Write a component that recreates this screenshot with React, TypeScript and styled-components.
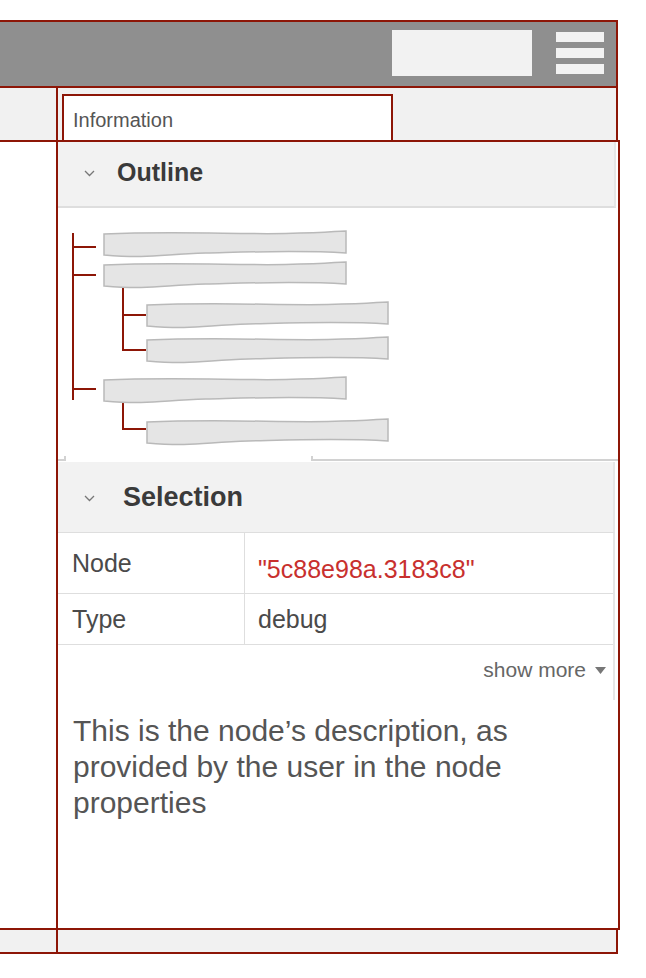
import React from "react";
import styled, { createGlobalStyle } from "styled-components";

const RED = "#8d1607";

const Global = createGlobalStyle`
  html, body { margin: 0; padding: 0; background: #fff; }
  body { font-family: "Liberation Sans", Arial, Helvetica, sans-serif; }
  *, *::before, *::after { box-sizing: border-box; }
`;

const Frame = styled.div`
  margin-top: 20px;
  width: 620px;
  display: flex;
  flex-direction: column;
`;

const TopBar = styled.header`
  width: 618px;
  height: 68px;
  background: #8f8f8f;
  border-top: 2px solid ${RED};
  border-bottom: 2px solid ${RED};
  border-right: 2px solid ${RED};
  display: flex;
  justify-content: flex-end;
  align-items: flex-start;
  gap: 24px;
  padding-right: 12px;
`;

const SearchBox = styled.div`
  width: 140px;
  height: 46px;
  margin-top: 8px;
  background: #f2f2f2;
`;

const Menu = styled.div`
  display: flex;
  flex-direction: column;
  gap: 6px;
  margin-top: 10px;
`;

const MenuBar = styled.span`
  display: block;
  width: 48px;
  height: 10px;
  background: #f2f2f2;
`;

const TabRow = styled.div`
  display: flex;
  width: 618px;
  height: 52px;
  background: #f1f1f1;
  border-right: 2px solid ${RED};
`;

const SideCell = styled.div<{ $bg?: string }>`
  width: 58px;
  flex-shrink: 0;
  border-right: 2px solid ${RED};
  background: ${(p) => p.$bg ?? "#fff"};
`;

const TabStrip = styled.div`
  flex: 1;
  display: flex;
  align-items: flex-end;
  padding-left: 4px;
`;

const Tab = styled.div`
  width: 331px;
  height: 46px;
  background: #fff;
  border: 2px solid ${RED};
  border-bottom: none;
  display: flex;
  align-items: center;
  padding: 4px 0 0 9px;
  font-size: 20px;
  color: #555;
`;

const MainRow = styled.div`
  display: flex;
  width: 620px;
  height: 790px;
  border-top: 2px solid ${RED};
  border-bottom: 2px solid ${RED};
`;

const Panel = styled.section`
  flex: 1;
  display: flex;
  flex-direction: column;
  border-right: 2px solid ${RED};
  background: #fff;
  overflow: hidden;
`;

const Footer = styled.footer`
  display: flex;
  width: 618px;
  height: 24px;
  background: #f1f1f1;
  border-right: 2px solid ${RED};
  border-bottom: 2px solid ${RED};
`;

const SectionHeader = styled.div<{
  $height: number;
  $inset: number;
  $gap: number;
  $size: number;
  $border: number;
  $lift: number;
}>`
  height: ${(p) => p.$height}px;
  margin-right: ${(p) => p.$inset}px;
  background: #f2f2f2;
  border-right: 2px solid #e6e6e6;
  border-bottom: ${(p) => p.$border}px solid #dedede;
  display: flex;
  align-items: center;
  gap: ${(p) => p.$gap}px;
  padding-left: 26px;
  padding-bottom: ${(p) => p.$lift}px;
  font-size: ${(p) => p.$size}px;
  font-weight: bold;
  color: #3a3a3a;
`;

const Chevron = styled.svg`
  width: 11px;
  height: 7px;
  flex-shrink: 0;
  margin-top: 2px;
`;

const OutlineBody = styled.div`
  height: 248px;
  padding: 17px 0 0 2px;
`;

const Splitter = styled.div`
  height: 6px;
  display: flex;
  align-items: flex-start;
`;

const SplitCap = styled.div<{ $grow?: boolean; $side: "left" | "right"; $offset?: number }>`
  height: 5px;
  width: ${(p) => (p.$grow ? "auto" : "8px")};
  flex: ${(p) => (p.$grow ? 1 : "none")};
  margin-left: ${(p) => p.$offset ?? 0}px;
  border-bottom: 2px solid #d2d2d2;
  border-${(p) => p.$side}: 2px solid #d2d2d2;
`;

const PropTable = styled.div`
  display: grid;
  grid-template-columns: 187px 1fr;
  margin-right: 3px;
  border-right: 2px solid #e6e6e6;
  font-size: 25px;
`;

const LabelCell = styled.div<{ $height: number }>`
  height: ${(p) => p.$height}px;
  display: flex;
  align-items: center;
  padding-left: 14px;
  color: #4a4a4a;
  border-right: 1px solid #dedede;
  border-bottom: 1px solid #dedede;
`;

const ValueCell = styled.div<{ $height: number; $shift?: number; $tone?: "red" | "plain" }>`
  height: ${(p) => p.$height}px;
  display: flex;
  align-items: center;
  padding-left: 13px;
  padding-top: ${(p) => p.$shift ?? 0}px;
  color: ${(p) => (p.$tone === "red" ? "#c8302e" : "#4a4a4a")};
  border-bottom: 1px solid #dedede;
`;

const ShowMoreRow = styled.div`
  height: 55px;
  margin-right: 3px;
  border-right: 2px solid #e6e6e6;
  display: flex;
  justify-content: flex-end;
  align-items: flex-start;
  gap: 9px;
  padding: 13px 7px 0 0;
  font-size: 21px;
  color: #666;
`;

const Caret = styled.svg`
  width: 11px;
  height: 7px;
  margin-top: 9px;
`;

const Description = styled.p`
  margin: 0;
  padding: 13px 24px 0 15px;
  font-size: 30px;
  line-height: 36px;
  color: #555;
`;

function bar(x: number, y: number, w: number, h: number) {
  return [
    `M ${x} ${y + 2}`,
    `C ${x + w * 0.3} ${y - 1} ${x + w * 0.55} ${y + 2.5} ${x + w * 0.75} ${y + 1.5}`,
    `S ${x + w * 0.95} ${y - 1} ${x + w} ${y - 1}`,
    `L ${x + w} ${y + h - 3}`,
    `C ${x + w * 0.8} ${y + h - 6} ${x + w * 0.6} ${y + h - 4} ${x + w * 0.42} ${y + h - 3}`,
    `S ${x + w * 0.2} ${y + h + 3} ${x} ${y + h - 1}`,
    "Z",
  ].join(" ");
}

const level0 = [232, 263, 378];
const level1 = [303, 338, 420];

function OutlineTree() {
  return (
    <svg width={340} height={225} viewBox="60 225 340 225">
      <g stroke={RED} strokeWidth={2} fill="none">
        <line x1={73} y1={233} x2={73} y2={400} />
        <line x1={72} y1={247} x2={96} y2={247} />
        <line x1={72} y1={275} x2={96} y2={275} />
        <line x1={72} y1={389} x2={96} y2={389} />
        <line x1={123} y1={287} x2={123} y2={351} />
        <line x1={122} y1={315} x2={146} y2={315} />
        <line x1={122} y1={350} x2={146} y2={350} />
        <line x1={123} y1={402} x2={123} y2={430} />
        <line x1={122} y1={429} x2={146} y2={429} />
      </g>
      <g fill="#e5e5e5" stroke="#b9b9b9" strokeWidth={1.5}>
        {level0.map((y) => (
          <path key={`a${y}`} d={bar(104, y, 242, 24)} />
        ))}
        {level1.map((y) => (
          <path key={`b${y}`} d={bar(147, y, 241, 24)} />
        ))}
      </g>
    </svg>
  );
}

function Chev() {
  return (
    <Chevron viewBox="0 0 11 7">
      <polyline points="1,1 5.5,5.5 10,1" fill="none" stroke="#777" strokeWidth={1.3} />
    </Chevron>
  );
}

export default function App() {
  return (
    <>
      <Global />
      <Frame>
        <TopBar>
          <SearchBox />
          <Menu>
            <MenuBar />
            <MenuBar />
            <MenuBar />
          </Menu>
        </TopBar>
        <TabRow>
          <SideCell $bg="#f1f1f1" />
          <TabStrip>
            <Tab>Information</Tab>
          </TabStrip>
        </TabRow>
        <MainRow>
          <SideCell />
          <Panel>
            <SectionHeader $height={66} $inset={2} $gap={22} $size={25} $border={2} $lift={4}>
              <Chev />
              Outline
            </SectionHeader>
            <OutlineBody>
              <OutlineTree />
            </OutlineBody>
            <Splitter>
              <SplitCap $side="right" />
              <SplitCap $side="left" $grow $offset={245} />
            </Splitter>
            <SectionHeader $height={71} $inset={3} $gap={28} $size={27} $border={1} $lift={0}>
              <Chev />
              Selection
            </SectionHeader>
            <PropTable>
              <LabelCell $height={61}>Node</LabelCell>
              <ValueCell $height={61} $shift={12} $tone="red">
                "5c88e98a.3183c8"
              </ValueCell>
              <LabelCell $height={51}>Type</LabelCell>
              <ValueCell $height={51}>debug</ValueCell>
            </PropTable>
            <ShowMoreRow>
              show more
              <Caret viewBox="0 0 11 7">
                <polygon points="0,0 11,0 5.5,7" fill="#777" />
              </Caret>
            </ShowMoreRow>
            <Description>
              This is the node’s description, as provided by the user in the node properties
            </Description>
          </Panel>
        </MainRow>
        <Footer>
          <SideCell $bg="#f1f1f1" />
        </Footer>
      </Frame>
    </>
  );
}
